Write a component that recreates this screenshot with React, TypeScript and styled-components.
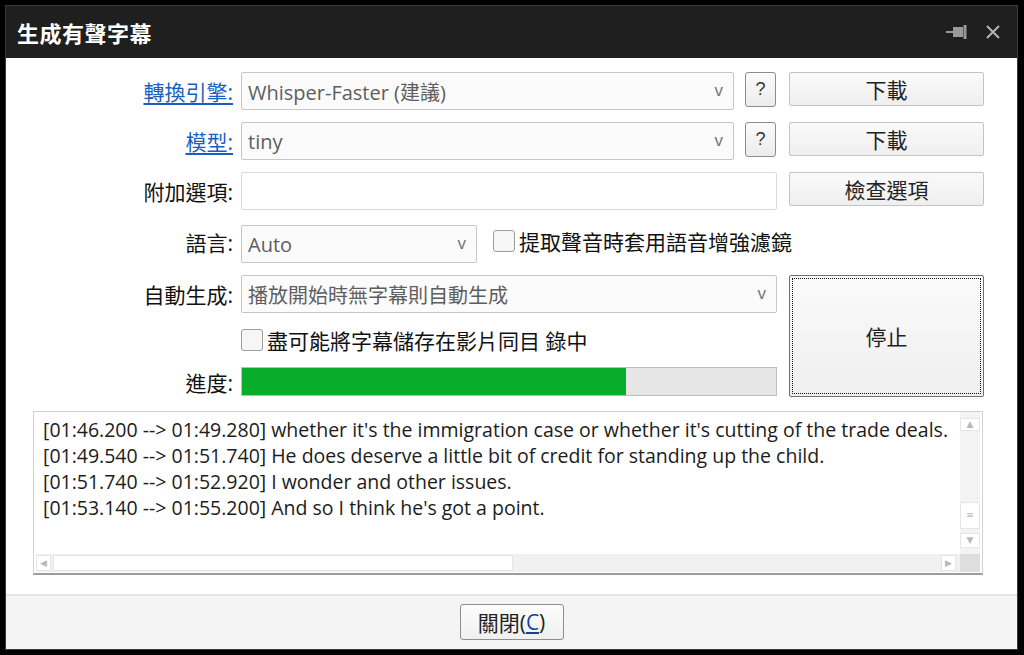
import React, { FC } from 'react'
import styled, { createGlobalStyle } from 'styled-components'

const GlobalStyle = createGlobalStyle`
    html, body { margin: 0; padding: 0; background: #000; }
    body { width: 1024px; height: 655px; overflow: hidden; }
    * { box-sizing: border-box; }
`

const cjk = `"Open Sans", "Noto Sans CJK TC", sans-serif`

const Window = styled.div`
    margin: 5px 0 0 5px;
    width: 1013px; height: 645px;
    display: flex;
    flex-direction: column;
    background: #fff;
    border: 1px solid #3a3a3a;
    font-family: ${ cjk };
`

const TitleBar = styled.div`
    height: 52px;
    flex: none;
    background: #1f1f1f;
    display: flex;
    align-items: center;
    padding: 0 16px 0 11px;
    color: #fff;
    h1 {
        flex: 1;
        margin: 0;
        font-size: 22px;
        font-weight: 700;
        letter-spacing: 0.5px;
        font-family: "Noto Sans CJK TC", sans-serif;
    }
    .icons {
        display: flex;
        gap: 16px;
        align-items: center;
    }
`

const Content = styled.div`
    flex: 1;
    padding: 14px 0 0 27px;
`

const Form = styled.div`
    display: grid;
    grid-template-columns: 200px 536px 199px;
    grid-template-rows: 38px 38px 38px 41px 38px 30px 30px;
    column-gap: 8px;
    row-gap: 12px;
    align-items: center;
`

const Label = styled.div<{ link?: boolean }>`
    grid-column: 1;
    justify-self: end;
    font-size: 21px;
    color: ${ p => p.link ? '#1a5fbf' : '#111' };
    text-decoration: ${ p => p.link ? 'underline' : 'none' };
    text-underline-offset: 3px;
    white-space: nowrap;
`

const Field = styled.div`
    grid-column: 2;
    display: flex;
    align-items: center;
    height: 100%;
`

const Select = styled.div<{ w?: number }>`
    flex: ${ p => p.w ? 'none' : '1' };
    width: ${ p => p.w ? `${ p.w }px` : '100%' };
    height: 38px;
    border: 1px solid #c6c6c6;
    border-radius: 2px;
    background: #fbfbfb;
    display: flex;
    align-items: center;
    padding: 0 10px 0 6px;
    font-size: 20px;
    color: #5e5e5e;
    span { flex: 1; white-space: nowrap; }
    i {
        font-style: normal;
        font-size: 17px;
        color: #777;
        font-family: "Liberation Sans", sans-serif;
    }
`

const Input = styled.div`
    width: 100%;
    height: 38px;
    border: 1px solid #dadada;
    border-radius: 2px;
    background: #fff;
`

const Button = styled.div<{ tall?: boolean }>`
    grid-column: 3;
    grid-row: ${ p => p.tall ? '5 / span 3' : 'auto' };
    justify-self: end;
    width: 195px;
    height: ${ p => p.tall ? '122px' : '34px' };
    align-self: start;
    border: 1px solid ${ p => p.tall ? '#6e6e6e' : '#c4c4c4' };
    border-radius: 2px;
    background: linear-gradient(#fafafa, #efefef);
    display: flex;
    align-items: center;
    justify-content: center;
    font-size: 21px;
    color: #222;
    outline: ${ p => p.tall ? '1px dotted #111' : 'none' };
    outline-offset: -4px;
`

const HelpButton = styled.div`
    width: 31px;
    height: 35px;
    margin-left: 11px;
    align-self: flex-start;
    border: 1px solid #8c8c8c;
    border-radius: 3px;
    background: linear-gradient(#fbfbfb, #ececec);
    display: flex;
    align-items: center;
    justify-content: center;
    font-size: 18px;
    color: #333;
    font-family: "Liberation Sans", sans-serif;
`

const Check = styled.label`
    display: flex;
    align-items: center;
    gap: 4px;
    font-size: 21px;
    color: #111;
    white-space: nowrap;
    &::before {
        content: '';
        flex: none;
        width: 20px; height: 20px;
        border: 1px solid #9c9c9c;
        border-radius: 3px;
        background: #f6f6f6;
    }
`

const Progress = styled.div`
    width: 100%;
    height: 29px;
    border: 1px solid #bdbdbd;
    background: #e6e6e6;
    div {
        height: 100%;
        background: #07ad2b;
    }
`

const LogBox = styled.div`
    margin-top: 14px;
    width: 950px;
    height: 164px;
    border: 1px solid #d2d2d2;
    border-bottom: 2px solid #9c9c9c;
    display: grid;
    grid-template-columns: 1fr 20px;
    grid-template-rows: 1fr 18px;
    padding: 0 2px 1px 2px;
`

const LogText = styled.div`
    padding: 5px 0 0 7px;
    font-size: 19.5px;
    line-height: 26px;
    color: #1c1c1c;
    white-space: nowrap;
    overflow: hidden;
`

const VScroll = styled.div`
    background: #f3f3f3;
    display: grid;
    grid-template-rows: 6px 13px 71px 27px 4px 15px 1fr;
`

const HScroll = styled.div`
    background: #f1f1f1;
    display: grid;
    grid-template-columns: 15px 2px 460px 1fr 15px 4px;
    padding: 1px 0;
`

const ScrollPart = styled.div`
    background: #fff;
    border: 1px solid #e6e6e6;
    display: flex;
    align-items: center;
    justify-content: center;
    color: #b8b8b8;
    font-size: 9px;
    line-height: 1;
    font-family: "DejaVu Sans", sans-serif;
`

const Corner = styled.div`
    background: #dedede;
`

const Footer = styled.div`
    height: 55px;
    flex: none;
    background: #f4f4f4;
    border-top: 2px solid #e4e4e4;
    display: flex;
    align-items: flex-start;
    justify-content: center;
    padding-top: 8px;
`

const CloseButton = styled.div`
    width: 104px;
    height: 36px;
    border: 1px solid #8e8e8e;
    border-radius: 3px;
    background: linear-gradient(#fdfdfd, #efefef);
    display: flex;
    align-items: center;
    justify-content: center;
    font-size: 21px;
    color: #222;
    u { color: #1a3e9a; text-decoration: underline; text-underline-offset: 2px; }
`

const lines = [
    "[01:46.200 --> 01:49.280] whether it's the immigration case or whether it's cutting of the trade deals.",
    "[01:49.540 --> 01:51.740] He does deserve a little bit of credit for standing up the child.",
    "[01:51.740 --> 01:52.920] I wonder and other issues.",
    "[01:53.140 --> 01:55.200] And so I think he's got a point.",
]

const PinIcon: FC = () => <svg width="24" height="16" viewBox="0 0 24 16">
    <path d="M1 8h7" stroke="#9a9a9a" strokeWidth="2" />
    <path d="M8 3h10v10H8z" fill="#9a9a9a" />
    <path d="M20 1v14" stroke="#9a9a9a" strokeWidth="3" />
</svg>

const CloseIcon: FC = () => <svg width="16" height="16" viewBox="0 0 16 16">
    <path d="M2 2l12 12M14 2L2 14" stroke="#b4b4b4" strokeWidth="2" />
</svg>

export default function App() {
    return <>
        <GlobalStyle />
        <Window>
            <TitleBar>
                <h1>生成有聲字幕</h1>
                <div className="icons"><PinIcon /><CloseIcon /></div>
            </TitleBar>
            <Content>
                <Form>
                    <Label link>轉換引擎:</Label>
                    <Field>
                        <Select w={ 493 }><span>Whisper-Faster (建議)</span><i>v</i></Select>
                        <HelpButton>?</HelpButton>
                    </Field>
                    <Button>下載</Button>

                    <Label link>模型:</Label>
                    <Field>
                        <Select w={ 493 }><span>tiny</span><i>v</i></Select>
                        <HelpButton>?</HelpButton>
                    </Field>
                    <Button>下載</Button>

                    <Label>附加選項:</Label>
                    <Field><Input /></Field>
                    <Button>檢查選項</Button>

                    <Label style={ { alignSelf: 'end', marginBottom: 6 } }>語言:</Label>
                    <Field style={ { alignItems: 'flex-end', gap: 16 } }>
                        <Select w={ 236 }><span>Auto</span><i>v</i></Select>
                        <Check style={ { marginBottom: 7 } }>提取聲音時套用語音增強濾鏡</Check>
                    </Field>

                    <Label>自動生成:</Label>
                    <Field>
                        <Select><span>播放開始時無字幕則自動生成</span><i>v</i></Select>
                    </Field>
                    <Button tall>停止</Button>

                    <Field><Check>盡可能將字幕儲存在影片同目 錄中</Check></Field>

                    <Label style={ { alignSelf: 'start' } }>進度:</Label>
                    <Field style={ { alignItems: 'flex-start' } }>
                        <Progress><div style={ { width: '72%' } } /></Progress>
                    </Field>
                </Form>
                <LogBox>
                    <LogText>
                        { lines.map( l => <div key={ l }>{ l }</div> ) }
                    </LogText>
                    <VScroll>
                        <div />
                        <ScrollPart>▲</ScrollPart>
                        <div />
                        <ScrollPart>≡</ScrollPart>
                        <div />
                        <ScrollPart>▼</ScrollPart>
                        <div />
                    </VScroll>
                    <HScroll>
                        <ScrollPart>◀</ScrollPart>
                        <div />
                        <ScrollPart />
                        <div />
                        <ScrollPart>▶</ScrollPart>
                        <div />
                    </HScroll>
                    <Corner />
                </LogBox>
            </Content>
            <Footer>
                <CloseButton>關閉(<u>C</u>)</CloseButton>
            </Footer>
        </Window>
    </>
}
